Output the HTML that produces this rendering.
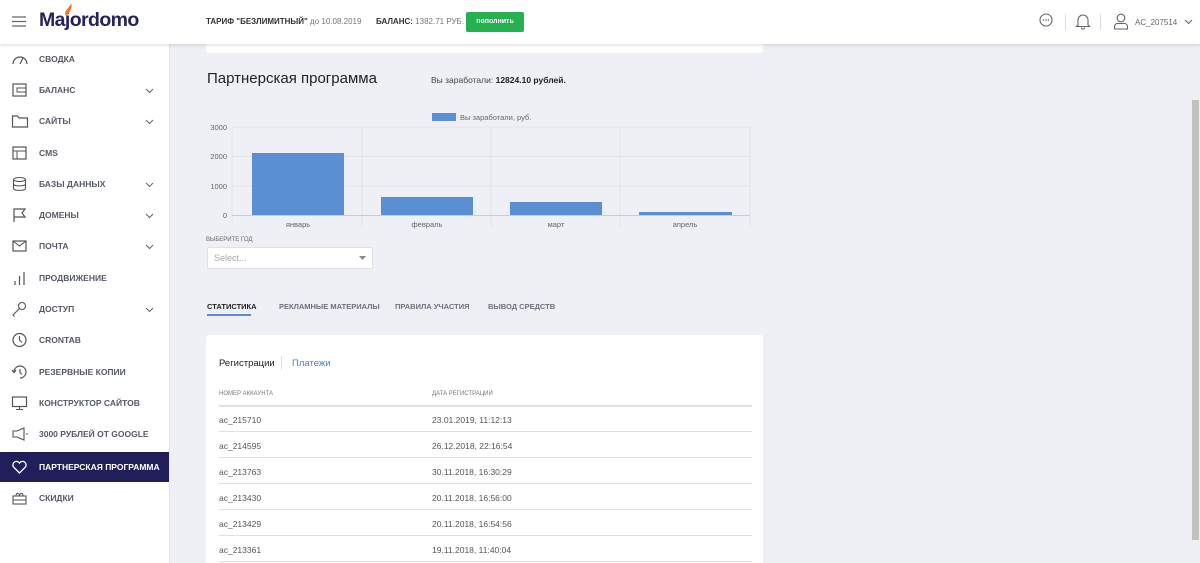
<!DOCTYPE html>
<html style="overflow:hidden;height:563px"><head><meta charset="utf-8"><style>
*{box-sizing:border-box;margin:0;padding:0}
body{width:1200px;height:563px;overflow:hidden;background:#eef0f5;font-family:"Liberation Sans",Arial,sans-serif;position:relative;color:#333}
.a{position:absolute;white-space:nowrap}
.hdr{position:absolute;left:0;top:0;width:1200px;height:44px;background:#fff;box-shadow:0 1px 4px rgba(0,0,0,.15);z-index:3}
.side{position:absolute;left:0;top:44px;width:169px;height:519px;background:#fff}
.it{position:absolute;left:0;width:169px;height:30px;font-size:8.5px;font-weight:bold;color:#555a66}
.it span{position:absolute;left:39px;top:10px}
.it svg{position:absolute;left:11px;top:7px}
.it .ch{position:absolute;left:145px;top:13px}
.act{background:#221e5c;color:#fff}
.tab{font-size:7.5px;font-weight:bold;color:#6c717c}
.row{position:absolute;left:219px;width:533px;height:26px;border-bottom:1px solid #dde0ea;font-size:8.5px;color:#555}
.row b{font-weight:normal;position:absolute;top:9px}
</style></head><body>
<div class="hdr">
 <svg class="a" style="left:12px;top:16px" width="14" height="11"><path d="M0 1h14M0 5.5h14M0 10h14" stroke="#666" stroke-width="1.3"/></svg>
 <div class="a" style="left:39px;top:9px;font-size:19.5px;font-weight:bold;color:#25235e;letter-spacing:-0.6px">Majordomo</div>
 <svg class="a" style="left:63px;top:3px" width="12" height="14"><path d="M3 13C0 8 6 6 8 0c2 5-1 9 -5 13z" fill="#f07a24"/></svg>
 <div class="a" style="left:206px;top:17px;font-size:8px;color:#333"><b>ТАРИФ "БЕЗЛИМИТНЫЙ"</b> <span style="color:#777">до 10.08.2019</span></div>
 <div class="a" style="left:376px;top:17px;font-size:8px;color:#333"><b>БАЛАНС:</b> <span style="color:#777">1382.71 РУБ.</span></div>
 <div class="a" style="left:466px;top:12px;width:58px;height:20px;background:#25b14f;border-radius:2px;color:#fff;font-size:7px;font-weight:bold;text-align:center;line-height:20px">пополнить</div>
 <svg class="a" style="left:1039px;top:13px" width="14" height="14"><circle cx="7" cy="7" r="6" fill="none" stroke="#666" stroke-width="1.1"/><circle cx="4.5" cy="7" r=".8" fill="#666"/><circle cx="7" cy="7" r=".8" fill="#666"/><circle cx="9.5" cy="7" r=".8" fill="#666"/></svg>
 <div class="a" style="left:1065px;top:14px;width:1px;height:16px;background:#ddd"></div>
 <svg class="a" style="left:1075px;top:13px" width="16" height="17"><path d="M3 12V7a5 5 0 0110 0v5l1.5 1.5h-13zM6.5 14.5a1.5 1.5 0 003 0" fill="none" stroke="#666" stroke-width="1.1"/></svg>
 <div class="a" style="left:1100px;top:14px;width:1px;height:16px;background:#ddd"></div>
 <svg class="a" style="left:1113px;top:13px" width="16" height="17"><circle cx="8" cy="5" r="3.8" fill="none" stroke="#666" stroke-width="1.1"/><path d="M1.5 16v-2.5a3 3 0 013-3h7a3 3 0 013 3V16z" fill="none" stroke="#666" stroke-width="1.1"/></svg>
 <div class="a" style="left:1135px;top:18px;font-size:8px;color:#666">AC_207514</div>
 <svg class="a" style="left:1184px;top:19px" width="9" height="6"><path d="M1 1l3.5 3.5L8 1" fill="none" stroke="#666" stroke-width="1.1"/></svg>
</div>
<div class="side">
 <div class="it" style="top:0"><svg width="18" height="16"><path d="M2 13a7 7 0 0114 0M9 13l3-6" fill="none" stroke="#555" stroke-width="1.2"/></svg><span>СВОДКА</span></div>
 <div class="it" style="top:31px"><svg width="18" height="16"><rect x="2" y="2" width="13" height="12" fill="none" stroke="#555" stroke-width="1.2"/><rect x="6" y="6" width="9" height="4" fill="none" stroke="#555"/></svg><span>БАЛАНС</span><svg class="ch" width="9" height="6"><path d="M1 1l3.5 3.5L8 1" fill="none" stroke="#666" stroke-width="1.1"/></svg></div>
 <div class="it" style="top:62px"><svg width="18" height="16"><path d="M1.5 3h5l1.5 2h8.5v9h-15z" fill="none" stroke="#555" stroke-width="1.2"/></svg><span>САЙТЫ</span><svg class="ch" width="9" height="6"><path d="M1 1l3.5 3.5L8 1" fill="none" stroke="#666" stroke-width="1.1"/></svg></div>
 <div class="it" style="top:94px"><svg width="18" height="16"><rect x="2" y="2" width="13" height="12" fill="none" stroke="#555" stroke-width="1.2"/><path d="M2 6h13M6 6v8" stroke="#555"/></svg><span>CMS</span></div>
 <div class="it" style="top:125px"><svg width="18" height="16"><ellipse cx="8.5" cy="3.5" rx="6" ry="2" fill="none" stroke="#555" stroke-width="1.1"/><path d="M2.5 3.5v9c0 2.5 12 2.5 12 0v-9M2.5 8c0 2.5 12 2.5 12 0" fill="none" stroke="#555" stroke-width="1.1"/></svg><span>БАЗЫ ДАННЫХ</span><svg class="ch" width="9" height="6"><path d="M1 1l3.5 3.5L8 1" fill="none" stroke="#666" stroke-width="1.1"/></svg></div>
 <div class="it" style="top:156px"><svg width="18" height="16"><path d="M3 15V2h11l-3 4 3 4H3" fill="none" stroke="#555" stroke-width="1.2"/></svg><span>ДОМЕНЫ</span><svg class="ch" width="9" height="6"><path d="M1 1l3.5 3.5L8 1" fill="none" stroke="#666" stroke-width="1.1"/></svg></div>
 <div class="it" style="top:187px"><svg width="18" height="16"><rect x="2" y="3" width="13" height="10" fill="none" stroke="#555" stroke-width="1.2"/><path d="M2 3l6.5 5L15 3" fill="none" stroke="#555" stroke-width="1.1"/></svg><span>ПОЧТА</span><svg class="ch" width="9" height="6"><path d="M1 1l3.5 3.5L8 1" fill="none" stroke="#666" stroke-width="1.1"/></svg></div>
 <div class="it" style="top:219px"><svg width="18" height="16"><path d="M4 15v-4M8.5 15V6M13 15V2" stroke="#555" stroke-width="1.2"/></svg><span>ПРОДВИЖЕНИЕ</span></div>
 <div class="it" style="top:250px"><svg width="18" height="16"><circle cx="11" cy="5" r="3.5" fill="none" stroke="#555" stroke-width="1.1"/><path d="M8.5 7.5L2 14l1.5 1.5" fill="none" stroke="#555" stroke-width="1.1"/></svg><span>ДОСТУП</span><svg class="ch" width="9" height="6"><path d="M1 1l3.5 3.5L8 1" fill="none" stroke="#666" stroke-width="1.1"/></svg></div>
 <div class="it" style="top:281px"><svg width="18" height="16"><circle cx="8.5" cy="8" r="6.5" fill="none" stroke="#555" stroke-width="1.2"/><path d="M8.5 4v4l2.5 2.5" fill="none" stroke="#555" stroke-width="1.1"/></svg><span>CRONTAB</span></div>
 <div class="it" style="top:313px"><svg width="18" height="16"><path d="M3 8a6 6 0 116 6M1 6l2 2.5L5 6M9 5v3.5l2 2" fill="none" stroke="#555" stroke-width="1.2"/></svg><span>РЕЗЕРВНЫЕ КОПИИ</span></div>
 <div class="it" style="top:344px"><svg width="18" height="16"><rect x="1.5" y="2" width="14" height="9.5" fill="none" stroke="#555" stroke-width="1.2"/><path d="M8.5 11.5V14M5 14.5h7" stroke="#555" stroke-width="1.1"/></svg><span>КОНСТРУКТОР САЙТОВ</span></div>
 <div class="it" style="top:375px"><svg width="18" height="16"><path d="M2 5h4l7-3v12l-7-3H2zM15 8h2" fill="none" stroke="#555" stroke-width="1.1"/></svg><span>3000 РУБЛЕЙ ОТ GOOGLE</span></div>
 <div class="it act" style="top:408px;height:30px"><svg width="18" height="16"><path d="M8.5 14L2.5 8a3.5 3.5 0 016-4 3.5 3.5 0 016 4z" fill="none" stroke="#fff" stroke-width="1.3"/></svg><span style="color:#fff">ПАРТНЕРСКАЯ ПРОГРАММА</span></div>
 <div class="it" style="top:439px"><svg width="18" height="16"><rect x="2" y="6" width="13" height="8" fill="none" stroke="#555" stroke-width="1.1"/><path d="M2 10h13M5 6c0-4 3.5-3 3.5 0 0-3 3.5-4 3.5 0" fill="none" stroke="#555" stroke-width="1.1"/></svg><span>СКИДКИ</span></div>
</div>
<div class="a" style="left:169px;top:44px;width:1px;height:519px;background:#e4e6ec"></div>
<div class="a" style="left:206px;top:40px;width:557px;height:13px;background:#fff;border-radius:3px"></div>
<div class="a" style="left:1192px;top:100px;width:7px;height:440px;background:#c1c1c1"></div>

<div class="a" style="left:207px;top:70px;font-size:15px;color:#222">Партнерская программа</div>
<div class="a" style="left:431px;top:75px;font-size:8.5px;color:#444">Вы заработали: <b style="color:#222">12824.10 рублей.</b></div>

<svg class="a" style="left:200px;top:105px" width="560" height="130" font-family="Liberation Sans,Arial,sans-serif">
 <rect x="232" y="8" width="24" height="8" fill="#5b8fd4"/>
 <text x="260" y="15" font-size="7.5" fill="#666">Вы заработали, руб.</text>
 <g stroke="#e2e3e8" stroke-width="1"><path d="M32 22h518M32 51.5h518M32 81h518"/><path d="M32 22v100M162 22v100M291 22v100M420 22v100M550 22v100"/></g>
 <path d="M32 110.5h518" stroke="#ccc"/>
 <g font-size="7.5" fill="#666" text-anchor="end"><text x="27" y="25">3000</text><text x="27" y="54">2000</text><text x="27" y="84">1000</text><text x="27" y="113">0</text></g>
 <g fill="#5b8fd4"><rect x="52" y="48" width="92" height="62"/><rect x="181" y="92" width="92" height="18"/><rect x="310" y="97" width="92" height="13"/><rect x="439" y="107" width="93" height="3"/></g>
 <g font-size="7.5" fill="#666" text-anchor="middle"><text x="98" y="122">январь</text><text x="227" y="122">февраль</text><text x="356" y="122">март</text><text x="485" y="122">апрель</text></g>
</svg>
<div class="a" style="left:206px;top:237px;font-size:6px;color:#666">ВЫБЕРИТЕ ГОД</div>
<div class="a" style="left:207px;top:247px;width:166px;height:22px;background:#fff;border:1px solid #dfe1e8;border-radius:2px;font-size:9px;color:#aaa;padding:5px 6px">Select...</div>
<svg class="a" style="left:359px;top:256px" width="8" height="5"><path d="M0 0h7L3.5 4z" fill="#888"/></svg>

<div class="a tab" style="left:207px;top:302px;color:#222">СТАТИСТИКА</div>
<div class="a" style="left:207px;top:314px;width:44px;height:2px;background:#5b8fd4"></div>
<div class="a tab" style="left:279px;top:302px">РЕКЛАМНЫЕ МАТЕРИАЛЫ</div>
<div class="a tab" style="left:395px;top:302px">ПРАВИЛА УЧАСТИЯ</div>
<div class="a tab" style="left:488px;top:302px">ВЫВОД СРЕДСТВ</div>

<div class="a" style="left:206px;top:335px;width:557px;height:228px;background:#fff;border-radius:3px 3px 0 0"></div>
<div class="a" style="left:219px;top:358px;font-size:9.5px;color:#222">Регистрации</div>
<div class="a" style="left:281px;top:356px;width:1px;height:14px;background:#dde0ea"></div>
<div class="a" style="left:292px;top:358px;font-size:9.5px;color:#4d7fc6">Платежи</div>
<div class="row" style="top:381px;border-bottom:2px solid #dde0ea"><b style="font-size:6px;color:#777;top:10px;left:0">НОМЕР АККАУНТА</b><b style="font-size:6px;color:#777;top:10px;left:213px">ДАТА РЕГИСТРАЦИИ</b></div>
<div class="row" style="top:406px"><b style="left:0">ac_215710</b><b style="left:213px">23.01.2019, 11:12:13</b></div>
<div class="row" style="top:432px"><b style="left:0">ac_214595</b><b style="left:213px">26.12.2018, 22:16:54</b></div>
<div class="row" style="top:458px"><b style="left:0">ac_213763</b><b style="left:213px">30.11.2018, 16:30:29</b></div>
<div class="row" style="top:484px"><b style="left:0">ac_213430</b><b style="left:213px">20.11.2018, 16:56:00</b></div>
<div class="row" style="top:510px"><b style="left:0">ac_213429</b><b style="left:213px">20.11.2018, 16:54:56</b></div>
<div class="row" style="top:536px;height:26px"><b style="left:0">ac_213361</b><b style="left:213px">19.11.2018, 11:40:04</b></div>
</body></html>
